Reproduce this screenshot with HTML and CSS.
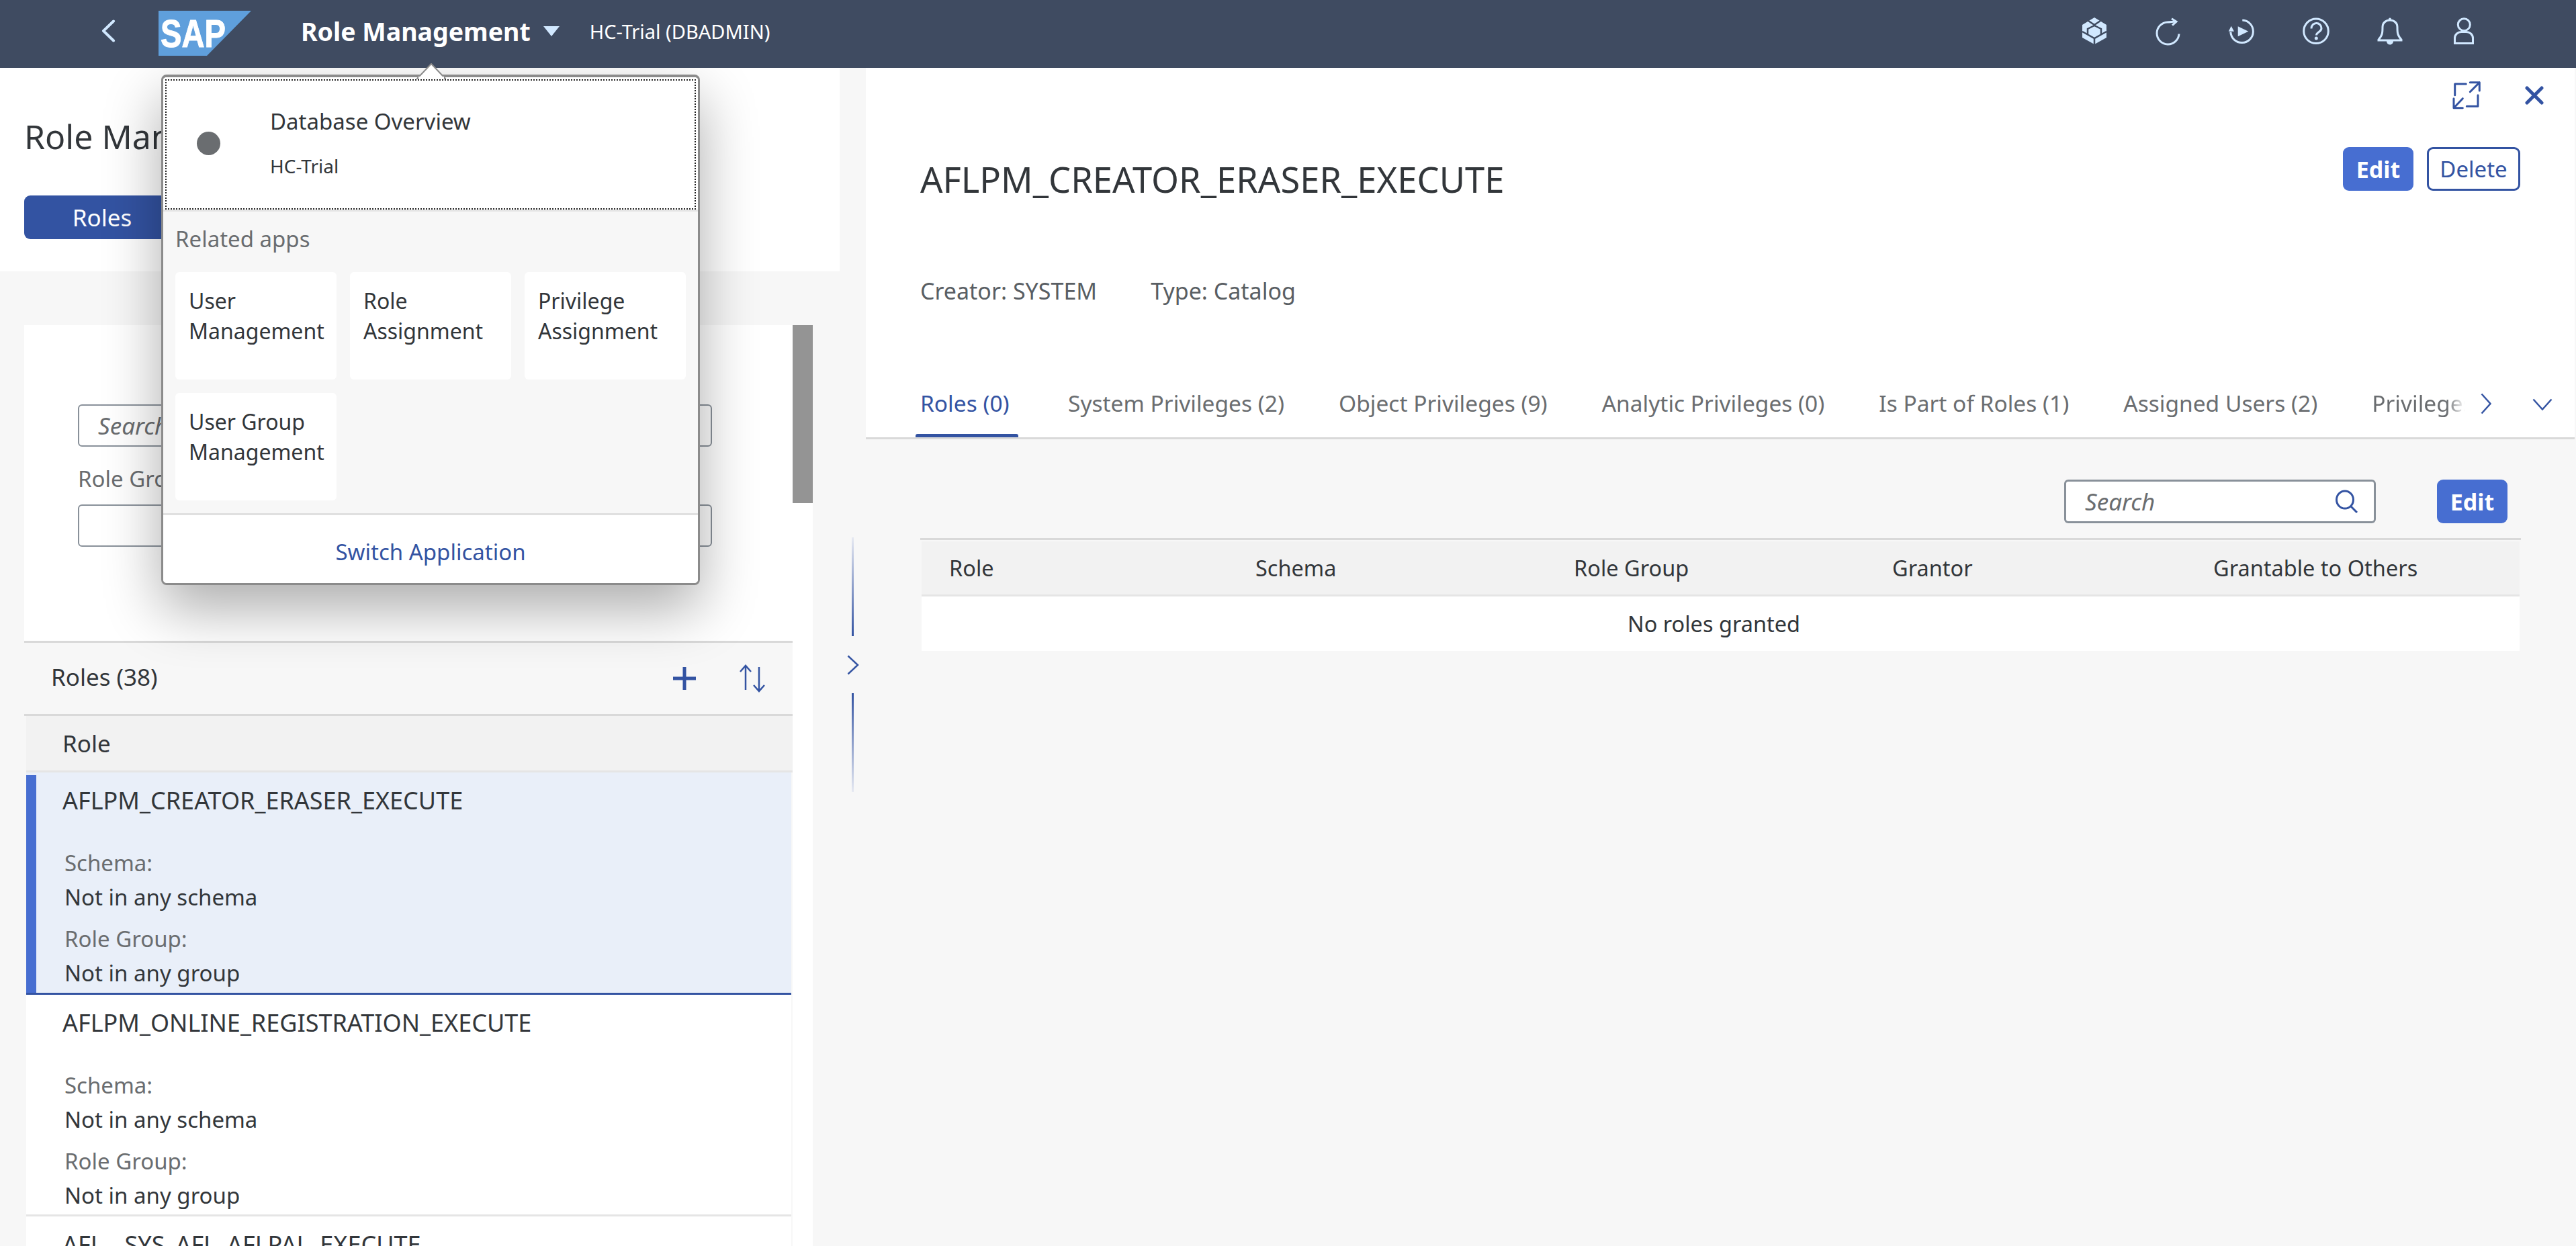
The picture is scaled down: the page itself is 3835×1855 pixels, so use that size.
FILE: index.html
```html
<!DOCTYPE html>
<html lang="en">
<head>
<meta charset="utf-8">
<title>Role Management</title>
<link rel="stylesheet" href="styles.css">
</head>
<body>
<div class="app">
  <header class="shell">
    <svg class="back" viewBox="0 0 21 34"><path d="M18 2.500 3 17l15 14.500"/></svg>
    <svg class="logo" viewBox="0 0 138 67"><polygon points="0,0 138,0 72,67 0,67" fill="#5f9fdc"/><text x="3" y="54" textLength="97" lengthAdjust="spacingAndGlyphs">SAP</text></svg>
    <span class="app-title">Role Management</span>
    <svg class="caret" viewBox="0 0 24 15"><polygon points="0,0 24,0 12,15"/></svg>
    <span class="system">HC-Trial (DBADMIN)</span>
    <div class="shell-icons">
      <svg class="ico" viewBox="0 0 40 40"><polygon class="fill" points="20,0 38,11 38,30 20,40 2,30 2,11"/><path class="gap" d="M11 5l9 6 9-6M2 21l18 10 18-10M20 12l-10 5v9M20 12l10 5v9M20 31v9"/></svg>
      <svg class="ico" viewBox="0 0 40 40"><path d="M36 24.500A16.500 16.500 0 1 1 19 7c4 0 8-1 12-1"/><path d="M25 1.700 32 6.200 26 11.700"/></svg>
      <svg class="ico" viewBox="0 0 40 40"><path d="M20.300 4A16.800 16.800 0 1 1 2.800 21.700"/><path class="fill" d="M3.700 12.700-.3 20.700H8zM13.700 13.300V28.300L29.300 20.700z"/></svg>
      <svg class="ico" viewBox="0 0 40 40"><circle cx="20" cy="20.300" r="18.300"/><path d="M13 16.500c0-5 3.500-8 7.500-8s7.500 3 7.500 7.500c0 6-7.500 5.500-7.500 10.500"/><circle class="fill" cx="20.300" cy="31" r="2.500"/></svg>
      <svg class="ico" viewBox="0 0 40 40"><path d="M20 4c-6 0-11 4-11 10 0 9 0 12-6 19v1h34v-1c-6-7-6-10-6-19 0-6-5-10-11-10z"/><circle class="fill" cx="20" cy="2.500" r="2"/><path class="fill" d="M15 35h10c0 3-2 5.500-5 5.500s-5-2.500-5-5.500z"/></svg>
      <svg class="ico" viewBox="0 0 40 40"><circle cx="20.300" cy="10.700" r="9"/><path d="M6.500 38.500V31c0-6 5-9.500 10-9.500h7c5 0 10 3.500 10 9.500v7.500z"/></svg>
    </div>
    <svg class="pop-arrow" viewBox="0 0 44 24"><polygon points="1,23 22,1 43,23" fill="#fff" stroke="#8b8b8b" stroke-width="2"/><rect x="3" y="20" width="38" height="4" fill="#fff"/></svg>
  </header>

  <main class="body">
    <section class="left">
      <div class="left-head">
        <h1 class="left-title">Role Management</h1>
        <button class="seg-btn">Roles</button>
      </div>
      <div class="scroll-panel">
        <div class="scroll-content">
          <div class="filter">
            <div class="input"><span class="placeholder">Search</span></div>
            <div class="filter-label">Role Group</div>
            <div class="input"></div>
          </div>
          <div class="list-wrap">
            <div class="toolbar">
              <span class="toolbar-title">Roles (38)</span>
              <svg class="plus" viewBox="0 0 36 36"><path d="M18 1v34M1 18h34"/></svg>
              <svg class="sort" viewBox="0 0 42 42"><path d="M11 38V2M3 11l8-9 8 9M31 4v36M23 31l8 9 8-9"/></svg>
            </div>
            <div class="list-head">Role</div>
            <div class="row row-selected">
              <div class="row-title">AFLPM_CREATOR_ERASER_EXECUTE</div>
              <div class="row-label">Schema:</div><div class="row-value">Not in any schema</div>
              <div class="row-label row-label-2">Role Group:</div><div class="row-value">Not in any group</div>
            </div>
            <div class="row">
              <div class="row-title">AFLPM_ONLINE_REGISTRATION_EXECUTE</div>
              <div class="row-label">Schema:</div><div class="row-value">Not in any schema</div>
              <div class="row-label row-label-2">Role Group:</div><div class="row-value">Not in any group</div>
            </div>
            <div class="row">
              <div class="row-title">AFL__SYS_AFL_AFLPAL_EXECUTE</div>
            </div>
          </div>
        </div>
        <div class="scrollbar"><div class="thumb"></div></div>
      </div>
    </section>

    <div class="splitter">
      <div class="split-line split-up"></div>
      <svg class="split-chev" viewBox="0 0 18 30"><path d="M1.500 1.500 16 15 1.500 28.500"/></svg>
      <div class="split-line split-down"></div>
    </div>

    <section class="detail">
      <div class="detail-head">
        <div class="detail-tools">
          <svg class="expand" viewBox="0 0 40 40"><path d="M19.300 4H2.700V20.700M25.300 1.700H39.300V14M39.300 1.700 25.300 15.700M37 20.700V37.300H20.300M1 25.700V39.700H14.300M1 39.700 14.300 25.700"/></svg>
          <svg class="close" viewBox="0 0 28 28"><path d="M3 3l22 22M25 3 3 25"/></svg>
        </div>
        <div class="title-row">
          <h2 class="detail-title">AFLPM_CREATOR_ERASER_EXECUTE</h2>
          <button class="btn btn-primary">Edit</button>
          <button class="btn btn-outline">Delete</button>
        </div>
        <div class="meta"><span>Creator: SYSTEM</span><span>Type: Catalog</span></div>
        <div class="tabs">
          <span class="tab tab-active">Roles (0)</span>
          <span class="tab">System Privileges (2)</span>
          <span class="tab">Object Privileges (9)</span>
          <span class="tab">Analytic Privileges (0)</span>
          <span class="tab">Is Part of Roles (1)</span>
          <span class="tab">Assigned Users (2)</span>
          <span class="tab tab-fade">Privileges</span>
          <svg class="tab-next" viewBox="0 0 16 32"><path d="M1.500 1.500 14.500 16 1.500 30.500"/></svg>
          <svg class="tab-more" viewBox="0 0 30 18"><path d="M1.500 1.500 15 16.500 28.500 1.500"/></svg>
        </div>
      </div>
      <div class="detail-body">
        <div class="table-tools">
          <div class="table-search"><span class="placeholder">Search</span>
            <svg class="search-ico" viewBox="0 0 36 36"><ellipse cx="15" cy="15" rx="12.500" ry="13"/><path d="M24 25l9 9"/></svg>
          </div>
          <button class="btn btn-primary">Edit</button>
        </div>
        <div class="table">
          <div class="t-head">
            <span class="t-col">Role</span><span class="t-col">Schema</span><span class="t-col">Role Group</span><span class="t-col">Grantor</span><span class="t-col">Grantable to Others</span>
          </div>
          <div class="t-empty">No roles granted</div>
        </div>
      </div>
    </section>

    <div class="popover">
      <div class="pop-top">
        <span class="pop-dot"></span>
        <div class="pop-text">
          <div class="pop-name">Database Overview</div>
          <div class="pop-sub">HC-Trial</div>
        </div>
      </div>
      <div class="pop-related">
        <div class="pop-related-title">Related apps</div>
        <div class="pop-grid">
          <div class="pop-card">User Management</div>
          <div class="pop-card">Role Assignment</div>
          <div class="pop-card">Privilege Assignment</div>
          <div class="pop-card">User Group Management</div>
        </div>
      </div>
      <div class="pop-foot">Switch Application</div>
    </div>
  </main>
</div>
</body>
</html>
```

FILE: styles.css
```css
* { box-sizing: border-box; }
html, body { margin: 0; padding: 0; height: 100%; }
body { font-family: "Noto Sans", "Open Sans", sans-serif; font-size: 35px; color: #32363a; background: #f7f7f7; overflow: hidden; }
.app { width: 3835px; height: 1855px; display: flex; flex-direction: column; overflow: hidden; }
h1, h2 { margin: 0; font-weight: 400; }
button { font-family: inherit; border: 0; padding: 0; }

/* shell */
.shell { position: relative; z-index: 5; height: 101px; flex: none; background: #3f4b61; display: flex; align-items: center; padding: 0 147px 9px 151px; }
.back { width: 21px; height: 34px; fill: none; stroke: #d1e8ff; stroke-width: 4; stroke-linecap: round; stroke-linejoin: round; margin-right: 64px; }
.logo { width: 138px; height: 67px; margin: 7px 74px 0 0; }
.logo text { font-family: "Liberation Sans", sans-serif; font-weight: 700; font-size: 58px; fill: #fff; stroke: #fff; stroke-width: 1; }
.app-title { font-weight: 700; font-size: 37.500px; color: #fff; margin-right: 19px; }
.caret { width: 24px; height: 15px; fill: #d1e8ff; margin-right: 45px; }
.system { font-size: 29px; color: #fff; }
.shell-icons { margin-left: auto; display: flex; gap: 70px; align-items: center; }
.ico { width: 40px; height: 40px; fill: none; stroke: #d1e8ff; stroke-width: 3; overflow: visible; }
.ico .fill { fill: #d1e8ff; stroke: none; }
.ico .gap { stroke: #3f4b61; stroke-width: 2.500; }
.pop-arrow { position: absolute; left: 620px; top: 94px; width: 44px; height: 24px; }

/* body */
.body { position: relative; flex: 1; min-height: 0; display: flex; overflow: hidden; }
.left { width: 1250px; flex: none; display: flex; flex-direction: column; min-height: 0; }
.left-head { background: #fff; height: 303px; padding: 77px 0 0 36px; }
.left-title { font-size: 50px; line-height: 50px; margin-bottom: 63px; white-space: nowrap; }
.seg-btn { width: 232px; height: 65px; border-radius: 9px; background: #3353a2; color: #fff; font-size: 35px; }
.scroll-panel { margin: 80px 40px 0 36px; flex: 1; min-height: 0; background: #fff; display: flex; overflow: hidden; }
.scroll-content { width: 1144px; flex: none; display: flex; flex-direction: column; }
.filter { height: 470px; flex: none; padding: 118px 0 0 80px; }
.input { width: 944px; height: 63px; border: 2px solid #89919a; border-radius: 6px; background: #fff; padding-left: 28px; display: flex; align-items: center; }
.placeholder { font-style: italic; color: #6a6d70; }
.filter-label { height: 86px; padding-top: 8px; display: flex; align-items: center; color: #6a6d70; font-size: 33px; }
.scrollbar { width: 30px; flex: none; }
.thumb { height: 265px; background: #949494; }
.list-wrap { flex: 1; min-height: 0; background: #f7f7f7; }
.toolbar { height: 112px; border-top: 3px solid #d9d9d9; border-bottom: 3px solid #d9d9d9; display: flex; align-items: center; padding: 0 0 6px 40px; }
.toolbar-title { flex: 1; }
.plus { width: 36px; height: 36px; fill: none; stroke: #3353a2; stroke-width: 5; margin: 6px 62px 0 0; }
.sort { width: 42px; height: 42px; fill: none; stroke: #3353a2; stroke-width: 2.500; margin: 6px 39px 0 0; }
.list-head { height: 84px; margin-left: 3px; background: #f2f2f2; border-bottom: 3px solid #e5e5e5; padding-left: 54px; display: flex; align-items: center; }
.row { height: 331px; margin: 0 2px 0 3px; background: #fff; border-bottom: 3px solid #e5e5e5; padding: 19px 0 0 54px; }
.row + .row { height: 330px; }
.row-selected { position: relative; background: #e9eff9; border-bottom-color: #3353a2; }
.row-selected::before { content: ""; position: absolute; left: 0; top: 4px; bottom: 0; width: 15px; background: #476ed1; }
.row-title { height: 46px; line-height: 46px; font-size: 36px; white-space: nowrap; }
.row-label { margin-left: 3px; margin-top: 46px; height: 47px; line-height: 47px; color: #6a6d70; font-size: 33px; }
.row-label-2 { margin-top: 13px; }
.row-value { margin: 3px 0 0 3px; height: 50px; line-height: 50px; font-size: 33px; }

/* splitter */
.splitter { width: 39px; flex: none; display: flex; flex-direction: column; align-items: center; padding-top: 699px; }
.split-line { width: 3px; height: 147px; }
.split-up { background: linear-gradient(to bottom, #e6e9f2, #3353a2); }
.split-down { background: linear-gradient(to top, #e6e9f2, #3353a2); }
.split-chev { width: 18px; height: 30px; margin: 28px 0 27px; fill: none; stroke: #3353a2; stroke-width: 2.500; }

/* detail */
.detail { flex: none; width: 2544px; display: flex; flex-direction: column; min-height: 0; }
.detail-head { background: #fff; height: 553px; flex: none; border-bottom: 3px solid #d9d9d9; display: flex; flex-direction: column; }
.detail-tools { height: 60px; padding: 20px 46px 0 0; display: flex; justify-content: flex-end; align-items: flex-start; }
.expand { width: 40px; height: 40px; fill: none; stroke: #3353a2; stroke-width: 3; stroke-linecap: round; stroke-linejoin: round; margin-right: 67px; overflow: visible; }
.close { width: 28px; height: 28px; margin-top: 7px; fill: none; stroke: #3353a2; stroke-width: 5; stroke-linecap: round; }
.title-row { display: flex; align-items: center; height: 65px; margin-top: 58px; padding: 0 81px; }
.detail-title { font-size: 52.500px; margin: 30px auto 0 0; white-space: nowrap; }
.btn { height: 65px; border-radius: 9px; font-size: 34px; padding: 0; }
.btn-primary { background: #476ed1; color: #fff; font-weight: 700; width: 105px; flex: none; }
.btn-outline { background: #fff; color: #3353a2; border: 3px solid #3353a2; width: 139px; margin-left: 20px; flex: none; font-size: 33px; }
.meta { margin: 125px 0 0 81px; display: flex; gap: 80px; color: #595e63; font-size: 34px; height: 48px; line-height: 48px; }
.tabs { position: relative; margin-top: 118px; padding-left: 81px; display: flex; gap: 81px; height: 50px; white-space: nowrap; }
.tab { color: #6a6d70; font-size: 33.500px; line-height: 50px; flex: none; }
.tab-active { color: #3353a2; position: relative; width: 139px; }
.tab-active::after { content: ""; position: absolute; left: -7px; right: -7px; bottom: -26px; height: 5px; background: #3353a2; border-radius: 3px 3px 0 0; }
.tab-fade { width: 139px; overflow: hidden; -webkit-mask-image: linear-gradient(to right, #000 80%, transparent 100%); mask-image: linear-gradient(to right, #000 80%, transparent 100%); }
.tab-next { position: absolute; left: 2404px; top: 10px; width: 16px; height: 32px; fill: none; stroke: #3353a2; stroke-width: 2.500; }
.tab-more { position: absolute; left: 2481px; top: 18px; width: 30px; height: 18px; fill: none; stroke: #3353a2; stroke-width: 2.500; }
.detail-body { flex: 1; padding: 60px 0 0 81px; }
.table-tools { display: flex; justify-content: flex-end; height: 65px; padding-right: 100px; gap: 91px; }
.table-search { width: 464px; height: 65px; border: 3px solid #89919a; border-radius: 6px; background: #fff; display: flex; align-items: center; justify-content: space-between; padding: 0 22px 0 28px; }
.search-ico { width: 36px; height: 36px; fill: none; stroke: #3353a2; stroke-width: 3; }
.table { margin: 22px 80px 0 0; border-top: 3px solid #d9d9d9; padding-top: 2px; }
.t-head { margin: 0 2px; height: 82px; background: #f2f2f2; border-bottom: 3px solid #e5e5e5; display: grid; grid-template-columns: 456px 474px 474px 478px 1fr; padding-left: 41px; align-items: center; font-size: 32.500px; }
.t-empty { margin: 0 2px; height: 81px; padding-right: 20px; background: #fff; display: flex; align-items: center; justify-content: center; font-size: 32.500px; }

/* popover */
.popover { position: absolute; left: 240px; top: 10px; width: 802px; height: 760px; background: #f7f7f7; border: 3px solid #8b8b8b; border-top-width: 4px; border-radius: 8px; box-shadow: 0 35px 85px rgba(0,0,0,.33); display: flex; flex-direction: column; overflow: hidden; }
.pop-top { height: 200px; flex: none; background: #fff; outline: 2px dotted #222; outline-offset: -5px; border-bottom: 3px solid #e5e5e5; display: flex; align-items: center; padding: 0 0 4px 50px; }
.pop-dot { width: 35px; height: 35px; margin: 4px 74px 0 0; border-radius: 50%; background: #6a6d70; }
.pop-name { font-size: 33px; line-height: 50px; }
.pop-sub { font-size: 28px; line-height: 40px; margin-top: 21px; }
.pop-related { flex: 1; padding: 0 18px; }
.pop-related-title { height: 80px; display: flex; align-items: center; color: #6a6d70; font-size: 33px; }
.pop-grid { margin-top: 10px; display: grid; grid-template-columns: 240px 240px 240px; gap: 20px; grid-auto-rows: 160px; }
.pop-card { background: #fff; border-radius: 6px; padding: 20px 20px; font-size: 32px; line-height: 45px; }
.pop-foot { height: 104px; flex: none; padding-top: 8px; background: #fff; border-top: 3px solid #e0e0e0; display: flex; align-items: center; justify-content: center; color: #3353a2; font-size: 33px; }
```
